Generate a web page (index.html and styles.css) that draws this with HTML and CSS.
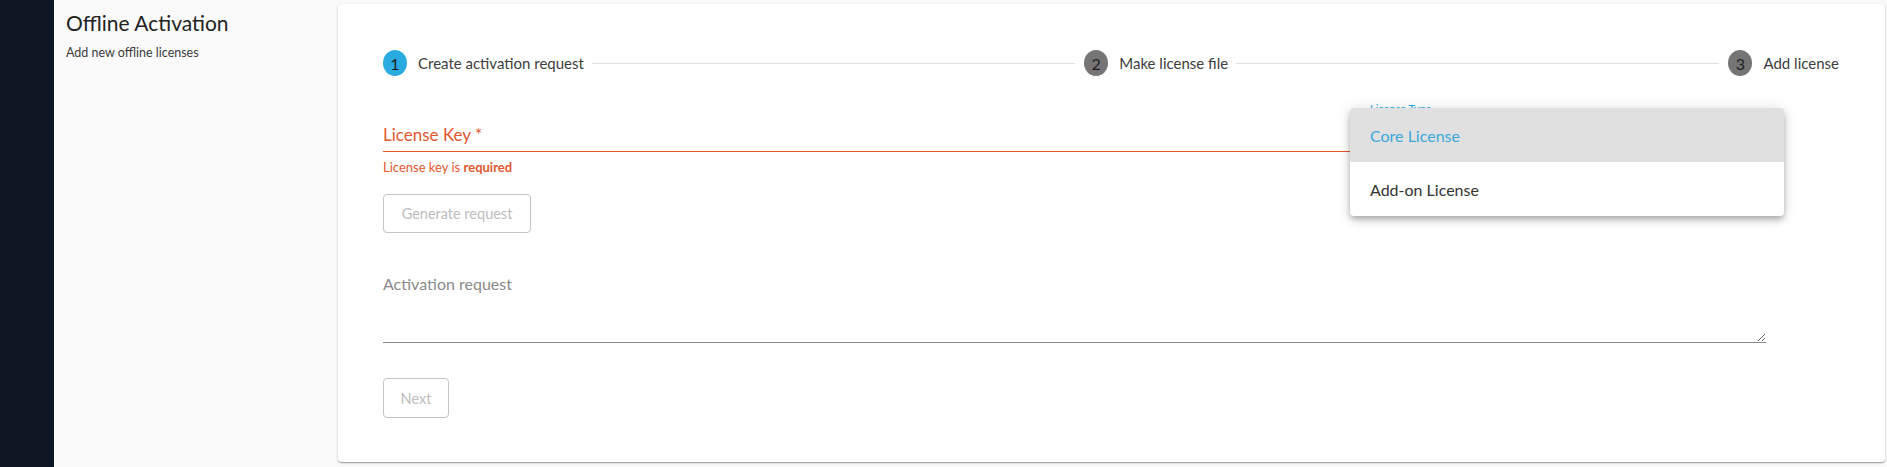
FILE: index.html
```html
<!DOCTYPE html>
<html lang="en">
<head>
<meta charset="utf-8">
<title>Offline Activation</title>
<link rel="stylesheet" href="styles.css">
</head>
<body>
<div class="app">
  <nav class="sidebar"></nav>
  <aside class="intro">
    <h1 class="intro-title">Offline Activation</h1>
    <p class="intro-sub">Add new offline licenses</p>
  </aside>
  <main class="main">
    <section class="card">
      <div class="stepper">
        <div class="step">
          <span class="step-num active">1</span>
          <span class="step-label">Create activation request</span>
        </div>
        <div class="step-line"></div>
        <div class="step">
          <span class="step-num">2</span>
          <span class="step-label">Make license file</span>
        </div>
        <div class="step-line"></div>
        <div class="step">
          <span class="step-num">3</span>
          <span class="step-label">Add license</span>
        </div>
      </div>

      <form class="form">
        <div class="row">
          <input class="key-input" type="text" placeholder="License Key *">
          <div class="select-field">
            <span class="select-label">License Type</span>
          </div>
        </div>
        <div class="error">License key is <strong>required</strong></div>
        <button type="button" class="btn btn-generate" disabled>Generate request</button>
        <textarea class="request" placeholder="Activation request"></textarea>
        <button type="button" class="btn btn-next" disabled>Next</button>
      </form>

      <ul class="menu">
        <li class="menu-item selected">Core License</li>
        <li class="menu-item">Add-on License</li>
      </ul>
    </section>
  </main>
</div>
</body>
</html>
```

FILE: styles.css
```css
* { box-sizing: border-box; }

html, body {
  margin: 0;
  padding: 0;
  height: 100%;
}

body {
  font-family: Lato, "Open Sans", sans-serif;
  color: #333;
  background: #fafafa;
}

.app {
  display: flex;
  height: 467px;
}

.sidebar {
  width: 54px;
  flex: none;
  background: #0e1723;
}

.intro {
  width: 284px;
  flex: none;
  background: #fafafa;
  padding: 10px 12px;
}

.intro-title {
  margin: 0;
  font-size: 21px;
  font-weight: 400;
  line-height: 26px;
  color: #222;
}

.intro-sub {
  margin: 9px 0 0;
  font-size: 12.5px;
  line-height: 16px;
  color: #3a3a3a;
}

.main {
  flex: 1;
  padding: 4px 2px 5px 0;
  background: #fafafa;
}

.card {
  position: relative;
  height: 100%;
  background: #fff;
  border-radius: 4px;
  box-shadow: 0 1px 3px rgba(0,0,0,.2), 0 1px 1px rgba(0,0,0,.14), 0 2px 1px -1px rgba(0,0,0,.12);
  padding: 47px 46px 0 45px;
}

.stepper {
  display: flex;
  align-items: center;
  height: 24px;
}

.step {
  display: flex;
  align-items: center;
  gap: 11px;
}

.step-num {
  width: 24px;
  height: 26px;
  border-radius: 50%;
  background: #757575;
  color: #1e1e1e;
  font-size: 16px;
  font-weight: 400;
  display: flex;
  align-items: center;
  justify-content: center;
}

.step-num.active {
  background: #29abe2;
}

.step-label {
  font-size: 15px;
  color: #3c3c3c;
}

.step-line {
  flex: 1;
  height: 1px;
  background: #e0e0e0;
  margin: 0 9px 0 8px;
}

.form {
  width: 1383px;
  display: flex;
  flex-direction: column;
  align-items: flex-start;
}

.row {
  margin-top: 43px;
  width: 100%;
  display: flex;
  gap: 20px;
}

.key-input {
  flex: 1;
  height: 34px;
  border: none;
  border-bottom: 1px solid #e4572e;
  padding: 0;
  font-family: inherit;
  font-size: 17px;
  outline: none;
  background: transparent;
}

.key-input::placeholder {
  color: #e4572e;
}

.select-field {
  width: 396px;
  flex: none;
  position: relative;
}

.select-label {
  position: absolute;
  left: 0;
  top: -16px;
  font-size: 11px;
  color: #29abe2;
}

.error {
  margin-top: 7px;
  font-size: 13px;
  line-height: 16px;
  color: #e4572e;
}

.error strong {
  font-weight: 700;
}

.btn {
  font-family: inherit;
  font-size: 14.5px;
  background: #fff;
  color: #bdbdbd;
  border: 1px solid #c4c4c4;
  border-radius: 4px;
  padding: 0;
}

.btn-generate {
  margin-top: 19px;
  width: 148px;
  height: 39px;
}

.btn-next {
  margin-top: 35px;
  width: 66px;
  height: 40px;
}

.request {
  margin-top: 29px;
  width: 100%;
  height: 81px;
  border: none;
  border-bottom: 1px solid #8a8a8a;
  padding: 12px 0 0;
  font-family: inherit;
  font-size: 16px;
  line-height: 20px;
  outline: none;
  background: transparent;
}

.request::placeholder {
  color: #8a8a8a;
}

.menu {
  position: absolute;
  left: 1012px;
  top: 104px;
  width: 434px;
  margin: 0;
  padding: 0;
  list-style: none;
  background: #fff;
  border-radius: 4px;
  box-shadow: 0 3px 5px -1px rgba(0,0,0,.2), 0 5px 8px rgba(0,0,0,.14), 0 1px 14px rgba(0,0,0,.12);
  overflow: hidden;
}

.menu-item {
  height: 54px;
  padding: 0 20px;
  display: flex;
  align-items: center;
  font-size: 16px;
  color: #333;
}

.menu-item.selected {
  background: #e0e0e0;
  color: #3aa8dc;
}
```
